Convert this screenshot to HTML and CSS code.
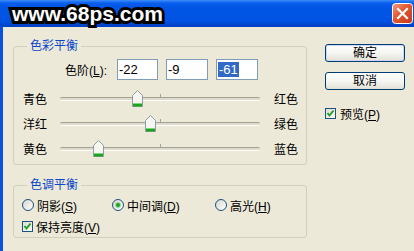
FILE: index.html
```html
<!DOCTYPE html>
<html>
<head>
    <meta charset="UTF-8">
    <title>色彩平衡</title>
    <link rel="stylesheet" href="styles.css">
</head>
<body>
    <div class="window">
        <div class="titlebar">
            <span class="mark">www.68ps.com</span>
            <span class="close">
                <svg width="21" height="21" viewBox="0 0 21 21">
                    <defs>
                        <linearGradient id="cg" x1="0" y1="0" x2="1" y2="1">
                            <stop offset="0" stop-color="#F39B7F"/>
                            <stop offset="0.45" stop-color="#E2572F"/>
                            <stop offset="1" stop-color="#C3391A"/>
                        </linearGradient>
                    </defs>
                    <rect x="0.5" y="0.5" width="20" height="20" rx="3" fill="url(#cg)" stroke="#fff"/>
                    <path d="M6 6 L15 15 M15 6 L6 15" stroke="#fff" stroke-width="2.2" stroke-linecap="square"/>
                </svg>
            </span>
        </div>
        <div class="frame">
            <div class="main">
                <fieldset class="group balance">
                    <legend>色彩平衡</legend>
                    <div class="levels">
                        <label class="levels-label">色阶(<u>L</u>):</label>
                        <div class="field first">-22</div>
                        <div class="field">-9</div>
                        <div class="field"><span class="sel">-61</span></div>
                    </div>
                    <div class="slider">
                        <span>青色</span>
                        <div class="track">
                            <i class="tick"></i>
                            <span class="thumb" style="left:39%">
                                <svg width="11" height="17" viewBox="0 0 11 17"><path d="M5.5 .5 L10.5 5.5 V16.5 H.5 V5.5 Z" fill="#F6F5F0" stroke="#8E9CA6"/><rect x="1" y="14" width="9" height="2.5" fill="#21A121"/><rect x="1" y="13" width="9" height="1" fill="#7CD87C"/></svg>
                            </span>
                        </div>
                        <span class="right">红色</span>
                    </div>
                    <div class="slider">
                        <span>洋红</span>
                        <div class="track">
                            <i class="tick"></i>
                            <span class="thumb" style="left:45.5%">
                                <svg width="11" height="17" viewBox="0 0 11 17"><path d="M5.5 .5 L10.5 5.5 V16.5 H.5 V5.5 Z" fill="#F6F5F0" stroke="#8E9CA6"/><rect x="1" y="14" width="9" height="2.5" fill="#21A121"/><rect x="1" y="13" width="9" height="1" fill="#7CD87C"/></svg>
                            </span>
                        </div>
                        <span class="right">绿色</span>
                    </div>
                    <div class="slider">
                        <span>黄色</span>
                        <div class="track">
                            <i class="tick"></i>
                            <span class="thumb" style="left:19.5%">
                                <svg width="11" height="17" viewBox="0 0 11 17"><path d="M5.5 .5 L10.5 5.5 V16.5 H.5 V5.5 Z" fill="#F6F5F0" stroke="#8E9CA6"/><rect x="1" y="14" width="9" height="2.5" fill="#21A121"/><rect x="1" y="13" width="9" height="1" fill="#7CD87C"/></svg>
                            </span>
                        </div>
                        <span class="right">蓝色</span>
                    </div>
                </fieldset>
                <fieldset class="group tone">
                    <legend>色调平衡</legend>
                    <div class="radios">
                        <label class="opt shadow"><span class="radio"></span><span>阴影(<u>S</u>)</span></label>
                        <label class="opt mid"><span class="radio on"></span><span>中间调(<u>D</u>)</span></label>
                        <label class="opt"><span class="radio"></span><span>高光(<u>H</u>)</span></label>
                    </div>
                    <label class="opt"><span class="check"><svg width="9" height="9" viewBox="0 0 9 9"><path d="M1.5 4 L3.5 6.5 L7.5 1.5" fill="none" stroke="#21A121" stroke-width="2"/></svg></span><span>保持亮度(<u>V</u>)</span></label>
                </fieldset>
            </div>
            <div class="side">
                <button class="btn default">确定</button>
                <button class="btn">取消</button>
                <label class="opt preview"><span class="check"><svg width="9" height="9" viewBox="0 0 9 9"><path d="M1.5 4 L3.5 6.5 L7.5 1.5" fill="none" stroke="#21A121" stroke-width="2"/></svg></span><span>预览(<u>P</u>)</span></label>
            </div>
        </div>
    </div>
</body>
</html>
```

FILE: styles.css
```css
* { margin: 0; padding: 0; box-sizing: border-box; }
body {
    background: #ECE9D8;
    font-family: "Liberation Sans", "Noto Sans CJK SC", sans-serif;
    font-size: 12px;
    color: #000;
}
u { text-decoration: underline; }

.window {
    width: 414px;
    height: 251px;
    overflow: hidden;
    display: flex;
    flex-direction: column;
}

/* title bar */
.titlebar {
    height: 27px;
    flex: none;
    display: flex;
    align-items: center;
    justify-content: space-between;
    padding: 0 1px 0 12px;
    background: linear-gradient(#3D8DF8 0, #0A5EEE 3px, #0055E5 7px, #0052E2 21px, #003FC4 27px);
}
.titlebar .mark {
    font-family: "Liberation Sans", sans-serif;
    font-weight: bold;
    font-size: 21px;
    color: #fff;
    -webkit-text-stroke: 6px #000;
    paint-order: stroke fill;
    line-height: 24px;
    margin-top: 1px;
}
.titlebar .close { display: flex; }

/* body frame */
.frame {
    flex: 1;
    display: flex;
    border-left: 3px solid #0A50DC;
    padding: 12px 0 0 10px;
}
.main { width: 294px; flex: none; }

.group {
    border: 1px solid #D0D0BF;
    border-radius: 3px;
    min-width: 0;
}
.group legend {
    color: #0A46C8;
    font-size: 12px;
    line-height: 14px;
    padding: 0 3px;
}
.balance { padding: 6px 8px 3px 9px; }
.balance legend { margin-left: 4px; }
.tone { margin-top: 13px; padding: 3px 8px 1px 8px; }
.tone legend { margin-left: 5px; }

/* levels row */
.levels {
    display: flex;
    align-items: center;
    height: 21px;
}
.levels-label {
    width: 84px;
    text-align: right;
    margin-right: 10px;
}
.field {
    width: 42px;
    height: 21px;
    margin-right: 8px;
    border: 1px solid #7F9DB9;
    background: #fff;
    font-size: 13px;
    line-height: 19px;
    padding-left: 1px;
}
.field.first { width: 41px; }
.field .sel { background: #316AC5; color: #fff; padding: 0 1px; }

/* sliders */
.slider {
    display: grid;
    grid-template-columns: 37px 200px auto;
    align-items: center;
    height: 25px;
}
.levels + .slider { margin-top: 6px; }
.slider .right { margin-left: 14px; }
.track {
    position: relative;
    height: 4px;
    border-top: 1px solid #A4A197;
    border-bottom: 1px solid #fff;
    background: #DEDBCB;
    border-radius: 2px;
}
.tick {
    position: absolute;
    left: 100px;
    top: -4px;
    width: 1px;
    height: 4px;
    background: #A4A197;
}
.thumb {
    position: absolute;
    top: -8px;
    margin-left: -6px;
    display: flex;
}

/* options */
.opt {
    display: flex;
    align-items: center;
    gap: 3px;
    height: 20px;
}
.radios { display: flex; }
.radios .shadow { width: 90px; }
.radios .mid { width: 103px; }
.tone > .opt { margin-top: 1px; }
.radio {
    width: 12px;
    height: 12px;
    border-radius: 50%;
    border: 1px solid #1C5180;
    background: linear-gradient(135deg, #D7D6CE, #fff);
    position: relative;
}
.radio.on::after {
    content: "";
    position: absolute;
    left: 3px;
    top: 3px;
    width: 4px;
    height: 4px;
    border-radius: 50%;
    background: #21A121;
    box-shadow: 0 0 0 1px #9BDB9B;
}
.check {
    width: 11px;
    height: 11px;
    border: 1px solid #1C5180;
    background: linear-gradient(135deg, #DCDBD3, #fff);
    display: flex;
    align-items: center;
    justify-content: center;
}

/* side buttons */
.side {
    margin: 5px 0 0 18px;
    display: flex;
    flex-direction: column;
    align-items: flex-start;
}
.btn {
    width: 80px;
    height: 18px;
    border: 1px solid #003C74;
    border-radius: 3px;
    background: linear-gradient(#FFFFFF, #F4F4F0 55%, #E3E0D5);
    font-family: "Liberation Sans", "Noto Sans CJK SC", sans-serif;
    font-size: 12px;
    line-height: 16px;
    color: #000;
}
.btn + .btn { margin-top: 10px; }
.btn.default { box-shadow: inset 0 0 0 1px #C7D9F5; }
.preview { margin-top: 15px; height: 16px; gap: 4px; }
```
